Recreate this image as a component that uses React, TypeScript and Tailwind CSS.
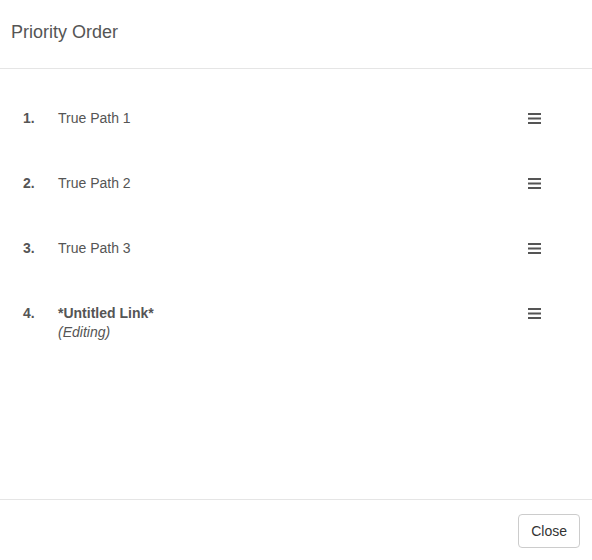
import React from 'react';

type Item = { id: number; name: string; editing?: boolean };

const items: Item[] = [
  { id: 1, name: 'True Path 1' },
  { id: 2, name: 'True Path 2' },
  { id: 3, name: 'True Path 3' },
  { id: 4, name: '*Untitled Link*', editing: true },
];

const DragHandle: React.FC = () => (
  <svg width="13" height="12" viewBox="0 0 13 12" className="text-[#555]">
    <rect x="0" y="1" width="13" height="2" fill="currentColor" />
    <rect x="0" y="5.5" width="13" height="2" fill="currentColor" />
    <rect x="0" y="10" width="13" height="2" fill="currentColor" />
  </svg>
);

const App: React.FC = () => {
  return (
    <div className="w-[592px] h-[560px] bg-white flex flex-col text-[#555] font-['Liberation_Sans',Arial,sans-serif]">
      {/* Header */}
      <div className="h-[69px] border-b border-[#e5e5e5] flex items-center pl-[11px] pb-[3px]">
        <h4 className="text-[18px] text-[#555]">Priority Order</h4>
      </div>

      {/* Body */}
      <div className="flex-1 pt-[39px]">
        <ul className="flex flex-col gap-[45px]">
          {items.map((item) => (
            <li key={item.id} className="flex items-start text-[14px] leading-[20px]">
              <span className="w-[35px] pl-[23px] box-content font-bold">{item.id}.</span>
              <div className="flex-1">
                <div className={item.editing ? 'font-bold' : ''}>{item.name}</div>
                {item.editing && <div className="italic leading-[19px]">(Editing)</div>}
              </div>
              <div className="pr-[51px] pt-[4px]">
                <DragHandle />
              </div>
            </li>
          ))}
        </ul>
      </div>

      {/* Footer */}
      <div className="h-[61px] border-t border-[#e5e5e5] flex items-center justify-end pr-[12px] pt-[2px]">
        <button className="h-[34px] px-[12px] text-[14px] text-[#333] bg-white border border-[#ccc] rounded-[4px]">
          Close
        </button>
      </div>
    </div>
  );
};

export default App;
